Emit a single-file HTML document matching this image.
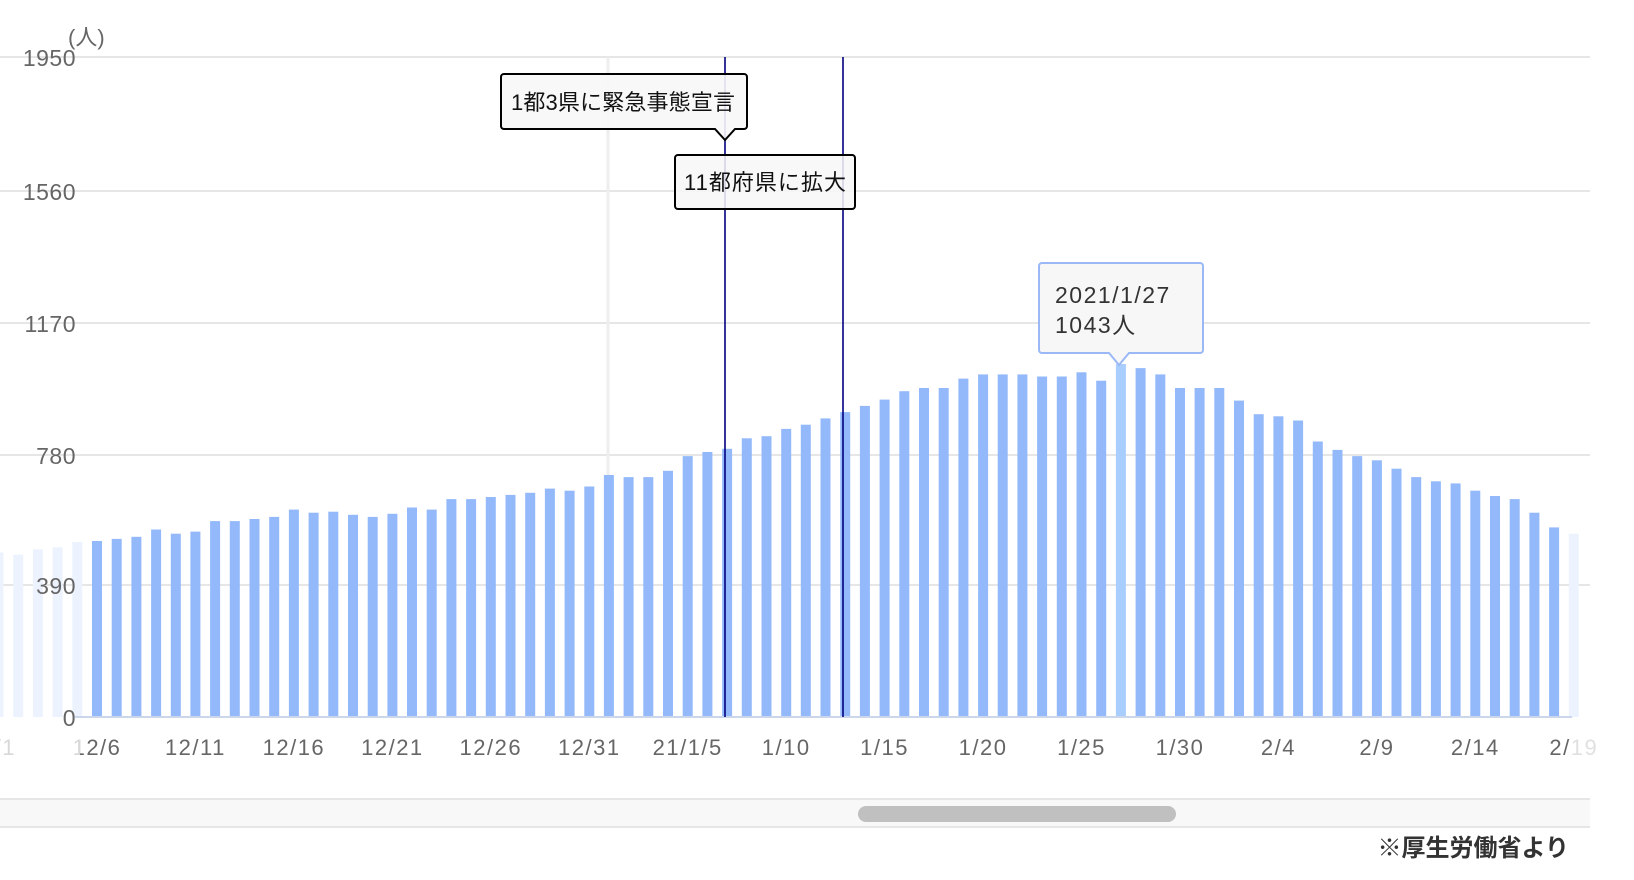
<!DOCTYPE html>
<html><head><meta charset="utf-8"><style>
html,body{margin:0;padding:0;background:#fff;width:1634px;height:880px;overflow:hidden}
svg text{font-family:"Liberation Sans","Noto Sans CJK JP",sans-serif}
</style></head><body>
<svg id="s" width="1634" height="880" xmlns="http://www.w3.org/2000/svg"></svg>
<script>
const s=document.getElementById('s');
let h='';
const ys=[57,191,323,455,585];
ys.forEach(y=>{h+=`<line x1="0" x2="1590" y1="${y}" y2="${y}" stroke="#e6e6e6" stroke-width="2"/>`;});
h+=`<line x1="608" x2="608" y1="57" y2="717" stroke="#eeeeee" stroke-width="3"/>`;
const tops=[530,532,527,525,520,519,517,515,508,512,510,500,500,498,496,489,492,491,494,496,493,487,489,479,479,477,475,473,469,471,467,456,458,458,452,438,434,431,421,419,412,408,402,396,390,384,376,373,373,364,360,360,360,362,362,358,366,350,354,360,373,373,373,385,398,400,404,424,432,438,442,450,458,462,464,471,476,479,492,506,512];
for(let k=0;k<tops.length;k++){
  const i=k-5;const x=92+i*19.69;
  const t=717-(687-tops[k])*(660/630);
  let col='#94b9fb';
  if(i<0||x>1565) col='#edf3fe';
  if(i===52) col='#a9cdfc';
  h+=`<rect x="${x.toFixed(1)}" y="${t.toFixed(1)}" width="10" height="${(717-t).toFixed(1)}" fill="${col}"/>`;
}
h+=`<line x1="75" x2="1572" y1="717" y2="717" stroke="#ccd6eb" stroke-width="2"/>`;
const yl=['1950','1560','1170','780','390','0'];
const yy=[57,191,323,455,585,717];
yl.forEach((t,j)=>{h+=`<text x="76" y="${yy[j]+9}" text-anchor="end" font-size="23" letter-spacing="0.5" fill="#666">${t}</text>`;});
h+=`<text x="68" y="45" font-size="22" fill="#666">(人)</text>`;
const xl=['2/1','12/6','12/11','12/16','12/21','12/26','12/31','21/1/5','1/10','1/15','1/20','1/25','1/30','2/4','2/9','2/14','2/19'];
xl.forEach((t,j)=>{const c=97+(j-1)*5*19.69;h+=`<text x="${c.toFixed(1)}" y="755" text-anchor="middle" font-size="22" letter-spacing="1.5" fill="#666">${t}</text>`;});
h+=`<rect x="0" y="728" width="30" height="36" fill="#fff" opacity="0.75"/><rect x="66" y="728" width="14" height="36" fill="#fff" opacity="0.75"/><rect x="1572" y="728" width="62" height="36" fill="#fff" opacity="0.8"/>`;
h+=`<line x1="725" x2="725" y1="57" y2="717" stroke="#000080" stroke-width="1.6"/>`;
h+=`<line x1="843" x2="843" y1="57" y2="717" stroke="#000080" stroke-width="1.6"/>`;
h+=`<path d="M504 74 H744 a3 3 0 0 1 3 3 V126 a3 3 0 0 1 -3 3 H735 L725 140 L715 129 H504 a3 3 0 0 1 -3 -3 V77 a3 3 0 0 1 3 -3Z" fill="#f7f7f7" fill-opacity="0.9" stroke="#000" stroke-width="2"/>`;
h+=`<text x="511" y="110" font-size="22" textLength="224" fill="#111">1都3県に緊急事態宣言</text>`;
h+=`<rect x="675" y="155" width="180" height="54" rx="3" fill="#f7f7f7" fill-opacity="0.85" stroke="#000" stroke-width="2"/>`;
h+=`<text x="684" y="190" font-size="22" textLength="162" fill="#111">11都府県に拡大</text>`;
h+=`<path d="M1042 263 H1200 a3 3 0 0 1 3 3 V350 a3 3 0 0 1 -3 3 H1129 L1119 365 L1109 353 H1042 a3 3 0 0 1 -3 -3 V266 a3 3 0 0 1 3 -3Z" fill="#f7f7f7" stroke="#9ab8f5" stroke-width="2"/>`;
h+=`<text x="1055" y="303" font-size="23" letter-spacing="1.5" fill="#333">2021/1/27</text>`;
h+=`<text x="1055" y="333" font-size="23" letter-spacing="1.5" fill="#333">1043人</text>`;
h+=`<rect x="0" y="799" width="1590" height="28" fill="#f8f8f8"/>`;
h+=`<line x1="0" x2="1590" y1="799" y2="799" stroke="#e6e6e6" stroke-width="2"/><line x1="0" x2="1590" y1="827" y2="827" stroke="#e6e6e6" stroke-width="2"/>`;
h+=`<rect x="858" y="806" width="318" height="16" rx="8" fill="#c0c0c0"/>`;
h+=`<text x="1569" y="856" text-anchor="end" font-size="24" font-weight="bold" fill="#333">※厚生労働省より</text>`;
s.innerHTML=h;
</script>
</body></html>
